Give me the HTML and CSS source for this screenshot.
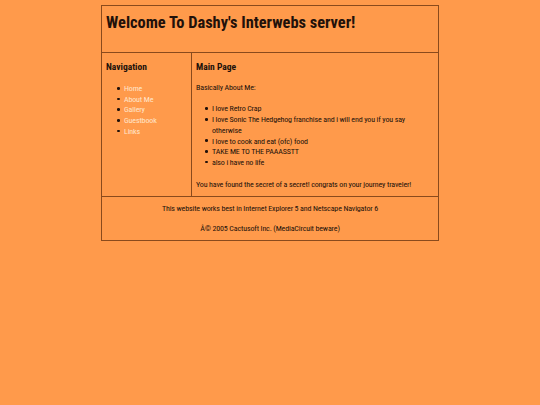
FILE: index.html
```html
<!DOCTYPE html>
<html>
<head>
<meta charset="utf-8">
<title>Dashy's Interwebs server</title>
<link rel="stylesheet" href="styles.css">
</head>
<body>
<div class="frame">
  <div class="header"><h1 class="title">Welcome To Dashy's Interwebs server!</h1></div>
  <div class="middle">
    <div class="nav">
      <h2 class="heading">Navigation</h2>
      <ul class="nav-list">
        <li><a href="#">Home</a></li>
        <li><a href="#">About Me</a></li>
        <li><a href="#">Gallery</a></li>
        <li><a href="#">Guestbook</a></li>
        <li><a href="#">Links</a></li>
      </ul>
    </div>
    <div class="main">
      <h2 class="heading">Main Page</h2>
      <p class="text">Basically About Me:</p>
      <ul class="main-list">
        <li>I love Retro Crap</li>
        <li>I love Sonic The Hedgehog franchise and i will end you if you say otherwise</li>
        <li>I love to cook and eat (ofc) food</li>
        <li>TAKE ME TO THE PAAASSTT</li>
        <li>also i have no life</li>
      </ul>
      <p class="text last">You have found the secret of a secret! congrats on your journey traveler!</p>
    </div>
  </div>
  <div class="footer">
    <p class="foot-line">This website works best in Internet Explorer 5 and Netscape Navigator 6</p>
    <p class="foot-line">Â© 2005 Cactusoft Inc. (MediaCircuit beware)</p>
  </div>
</div>
</body>
</html>
```
FILE: styles.css
```css
html, body {
  margin: 0;
  padding: 0;
  background: #ff9a4b;
}
body {
  font-family: Roboto, "Liberation Sans", Arial, sans-serif;
  font-stretch: 75%;
  color: #22110a;
  font-size: 8px;
  letter-spacing: -0.15px;
  line-height: 10.7px;
}
.frame {
  width: 336px;
  margin: 5px auto 0;
  border: 1px solid #8a4a1c;
}
.header {
  height: 46px;
  border-bottom: 1px solid #8a4a1c;
  padding: 0 4px;
}
.title {
  margin: 0;
  padding-top: 7px;
  font-size: 16.4px;
  letter-spacing: 0;
  line-height: 20px;
  font-weight: bold;
}
.middle {
  display: grid;
  grid-template-columns: 90px 1fr;
  height: 143px;
  border-bottom: 1px solid #8a4a1c;
}
.nav {
  border-right: 1px solid #8a4a1c;
  padding: 0 4px;
}
.main {
  padding: 0 5px 0 4px;
}
.heading {
  margin: 0;
  padding-top: 8px;
  font-size: 9.5px;
  letter-spacing: 0;
  line-height: 12px;
  font-weight: bold;
}
.nav-list, .main-list {
  margin: 0;
  list-style: none;
}
.nav-list li::before, .main-list li::before {
  content: "";
  display: inline-block;
  width: 2.6px;
  height: 2.6px;
  border-radius: 50%;
  background: #22110a;
  vertical-align: 1.5px;
  margin-left: -6.6px;
  margin-right: 4px;
}
.nav-list {
  margin-top: 11px;
  padding-left: 18px;
}
.main-list {
  margin-top: 10.7px;
  padding-left: 16px;
}
.nav-list a {
  color: #ffe6cc;
  text-decoration: none;
}
.text {
  margin: 10px 0 0;
}
.text.last {
  margin-top: 11px;
}
.footer {
  height: 43px;
  text-align: center;
}
.foot-line {
  margin: 0;
  padding-top: 6px;
  line-height: 11px;
}
.foot-line + .foot-line {
  padding-top: 9px;
}
```
